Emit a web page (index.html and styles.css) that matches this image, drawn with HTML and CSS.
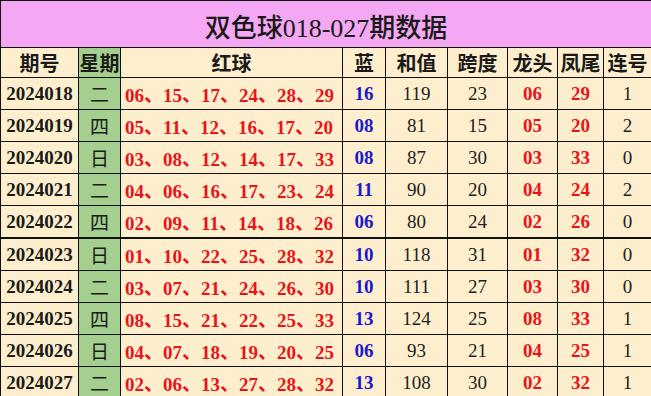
FILE: index.html
```html
<!DOCTYPE html>
<html lang="zh">
<head>
<meta charset="utf-8">
<link rel="stylesheet" href="styles.css">
</head>
<body>
<table class="tbl">
<colgroup>
<col class="c-id"><col class="c-wk"><col class="c-red"><col class="c-blue"><col class="c-sum"><col class="c-span"><col class="c-head"><col class="c-tail"><col class="c-lian">
</colgroup>
<tr class="title"><td colspan="9">双色球<span class="tnum">018-027</span>期数据</td></tr>
<tr class="hdr"><td>期号</td><td class="wk">星期</td><td>红球</td><td>蓝</td><td>和值</td><td>跨度</td><td>龙头</td><td>凤尾</td><td>连号</td></tr>
<tr><td class="id">2024018</td><td class="wk">二</td><td class="red">06、15、17、24、28、29</td><td class="blue">16</td><td class="n">119</td><td class="n">23</td><td class="rb">06</td><td class="rb">29</td><td class="n">1</td></tr>
<tr><td class="id">2024019</td><td class="wk">四</td><td class="red">05、11、12、16、17、20</td><td class="blue">08</td><td class="n">81</td><td class="n">15</td><td class="rb">05</td><td class="rb">20</td><td class="n">2</td></tr>
<tr><td class="id">2024020</td><td class="wk">日</td><td class="red">03、08、12、14、17、33</td><td class="blue">08</td><td class="n">87</td><td class="n">30</td><td class="rb">03</td><td class="rb">33</td><td class="n">0</td></tr>
<tr><td class="id">2024021</td><td class="wk">二</td><td class="red">04、06、16、17、23、24</td><td class="blue">11</td><td class="n">90</td><td class="n">20</td><td class="rb">04</td><td class="rb">24</td><td class="n">2</td></tr>
<tr class="sep"><td class="id">2024022</td><td class="wk">四</td><td class="red">02、09、11、14、18、26</td><td class="blue">06</td><td class="n">80</td><td class="n">24</td><td class="rb">02</td><td class="rb">26</td><td class="n">0</td></tr>
<tr><td class="id">2024023</td><td class="wk">日</td><td class="red">01、10、22、25、28、32</td><td class="blue">10</td><td class="n">118</td><td class="n">31</td><td class="rb">01</td><td class="rb">32</td><td class="n">0</td></tr>
<tr><td class="id">2024024</td><td class="wk">二</td><td class="red">03、07、21、24、26、30</td><td class="blue">10</td><td class="n">111</td><td class="n">27</td><td class="rb">03</td><td class="rb">30</td><td class="n">0</td></tr>
<tr><td class="id">2024025</td><td class="wk">四</td><td class="red">08、15、21、22、25、33</td><td class="blue">13</td><td class="n">124</td><td class="n">25</td><td class="rb">08</td><td class="rb">33</td><td class="n">1</td></tr>
<tr><td class="id">2024026</td><td class="wk">日</td><td class="red">04、07、18、19、20、25</td><td class="blue">06</td><td class="n">93</td><td class="n">21</td><td class="rb">04</td><td class="rb">25</td><td class="n">1</td></tr>
<tr><td class="id">2024027</td><td class="wk">二</td><td class="red">02、06、13、27、28、32</td><td class="blue">13</td><td class="n">108</td><td class="n">30</td><td class="rb">02</td><td class="rb">32</td><td class="n">1</td></tr>
</table>
</body>
</html>
```
FILE: styles.css
```css
html, body { margin: 0; padding: 0; background: #fff; }
.tbl {
  border-collapse: collapse;
  table-layout: fixed;
  width: 651px;
  font-family: "Liberation Serif", "Noto Sans CJK SC", serif;
  color: #1a1a1a;
}
.c-id { width: 78px; }
.c-wk { width: 42px; }
.c-red { width: 222px; }
.c-blue { width: 43px; }
.c-sum { width: 62px; }
.c-span { width: 60px; }
.c-head { width: 50px; }
.c-tail { width: 46px; }
.c-lian { width: 48px; }
.tbl td {
  border: 1px solid #111;
  background: #fdefcd;
  text-align: center;
  padding: 0;
  white-space: nowrap;
  overflow: hidden;
  font-size: 19px;
  height: 31px;
}
.tbl tr.title td {
  background: #f4a8f3;
  height: 44px;
  font-size: 26px;
  font-weight: 500;
  color: #1a1a1a;
  padding-top: 2px;
}
.tbl .tnum { font-weight: normal; }
.tbl tr.hdr td {
  height: 29px;
  font-weight: bold;
  font-size: 20px;
}
.tbl td.wk { background: #a4cf8e; font-weight: normal; }
.tbl tr.hdr td.wk { font-weight: bold; }
.tbl td.id { font-weight: bold; font-size: 19px; }
.tbl td.red { color: #e8141a; font-weight: bold; text-align: left; padding-left: 4px; }
.tbl td.blue { color: #1a1acc; font-weight: bold; }
.tbl td.rb { color: #e8141a; font-weight: bold; }
.tbl td.n { font-weight: normal; color: #222; }
.tbl tr.sep td { border-bottom: 2px solid #111; }
```
